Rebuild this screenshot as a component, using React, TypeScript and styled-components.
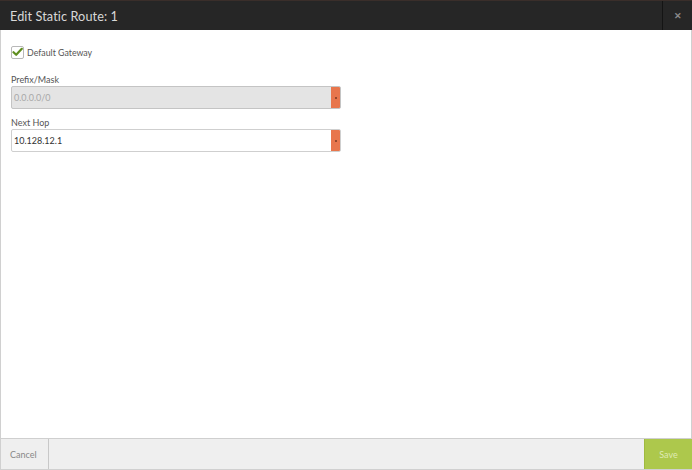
import React from "react";
import styled, { createGlobalStyle } from "styled-components";

const Global = createGlobalStyle`
  html, body { margin: 0; padding: 0; background: #fff; }
  body { font-family: Lato, "Open Sans", sans-serif; }
  * { box-sizing: border-box; }
`;

const Dialog = styled.div`
  width: 692px;
  height: 470px;
  display: flex;
  flex-direction: column;
  background: #fff;
`;

const Header = styled.div`
  height: 30px;
  display: flex;
  background: #262626;
  border-top: 1px solid #3a2e2a;
`;

const Title = styled.div`
  flex: 1;
  display: flex;
  align-items: center;
  padding-left: 10px;
  color: #d8d8d8;
  font-size: 12.7px;
  font-weight: 400;
  letter-spacing: 0.1px;
`;

const Close = styled.div`
  width: 30px;
  border-left: 1px solid #141414;
  display: flex;
  align-items: center;
  justify-content: center;
  color: #8a8a8a;
  font-size: 9px;
  font-weight: 700;
`;

const Body = styled.div`
  flex: 1;
  border-left: 1px solid #d0d0d0;
  border-right: 1px solid #d0d0d0;
  padding: 16px 0 0 10px;
  display: flex;
  flex-direction: column;
`;

const CheckRow = styled.label`
  display: flex;
  align-items: center;
  gap: 3px;
  font-size: 8.8px;
  color: #555;
  height: 12px;
`;

const Box = styled.span`
  width: 13px;
  height: 13px;
  border: 1px solid #b8b8b8;
  border-radius: 2px;
  background: #fff;
  display: flex;
  align-items: center;
  justify-content: center;
`;

const Field = styled.div<{ $top: number }>`
  margin-top: ${(p) => p.$top}px;
  display: flex;
  flex-direction: column;
  width: 330px;
`;

const Label = styled.div`
  font-size: 9px;
  color: #555;
  height: 12px;
  line-height: 12px;
`;

const InputWrap = styled.div<{ $disabled?: boolean }>`
  height: 23px;
  display: flex;
  border: 1px solid ${(p) => (p.$disabled ? "#c4c4c4" : "#cfcfcf")};
  border-radius: 2px;
  background: ${(p) => (p.$disabled ? "#e4e4e4" : "#fff")};
  overflow: hidden;
`;

const Value = styled.div<{ $disabled?: boolean }>`
  flex: 1;
  display: flex;
  align-items: center;
  padding-left: 2px;
  font-size: 9px;
  color: ${(p) => (p.$disabled ? "#a8a8a8" : "#333")};
`;

const Required = styled.div`
  width: 9px;
  background: #e8764c;
  display: flex;
  align-items: center;
  justify-content: center;
  &::after {
    content: "";
    width: 2px;
    height: 2px;
    border-radius: 1px;
    background: #7a3a22;
  }
`;

const Footer = styled.div`
  height: 32px;
  display: flex;
  background: #efefef;
  border-top: 1px solid #cfcfcf;
  border-left: 1px solid #d0d0d0;
  border-bottom: 1px solid #d0d0d0;
`;

const CancelBtn = styled.div`
  width: 48px;
  border-right: 1px solid #c8c8c8;
  display: flex;
  align-items: center;
  padding-left: 9px;
  font-size: 9px;
  color: #888;
`;

const Spacer = styled.div`
  flex: 1;
`;

const SaveBtn = styled.div`
  width: 48px;
  background: #adc84c;
  border-left: 1px solid #9fba40;
  display: flex;
  align-items: center;
  justify-content: center;
  font-size: 9px;
  color: #dfeab4;
`;

export default function App() {
  return (
    <>
      <Global />
      <Dialog>
        <Header>
          <Title>Edit Static Route: 1</Title>
          <Close>✕</Close>
        </Header>
        <Body>
          <CheckRow>
            <Box>
              <svg width="11" height="10" viewBox="0 0 11 10">
                <path d="M1.5 5.2 L4.2 7.8 L9.8 1.8" fill="none" stroke="#5f8e1f" strokeWidth="2.2" strokeLinecap="round" strokeLinejoin="round" />
              </svg>
            </Box>
            Default Gateway
          </CheckRow>
          <Field $top={16}>
            <Label>Prefix/Mask</Label>
            <InputWrap $disabled>
              <Value $disabled>0.0.0.0/0</Value>
              <Required />
            </InputWrap>
          </Field>
          <Field $top={8}>
            <Label>Next Hop</Label>
            <InputWrap>
              <Value>10.128.12.1</Value>
              <Required />
            </InputWrap>
          </Field>
        </Body>
        <Footer>
          <CancelBtn>Cancel</CancelBtn>
          <Spacer />
          <SaveBtn>Save</SaveBtn>
        </Footer>
      </Dialog>
    </>
  );
}
